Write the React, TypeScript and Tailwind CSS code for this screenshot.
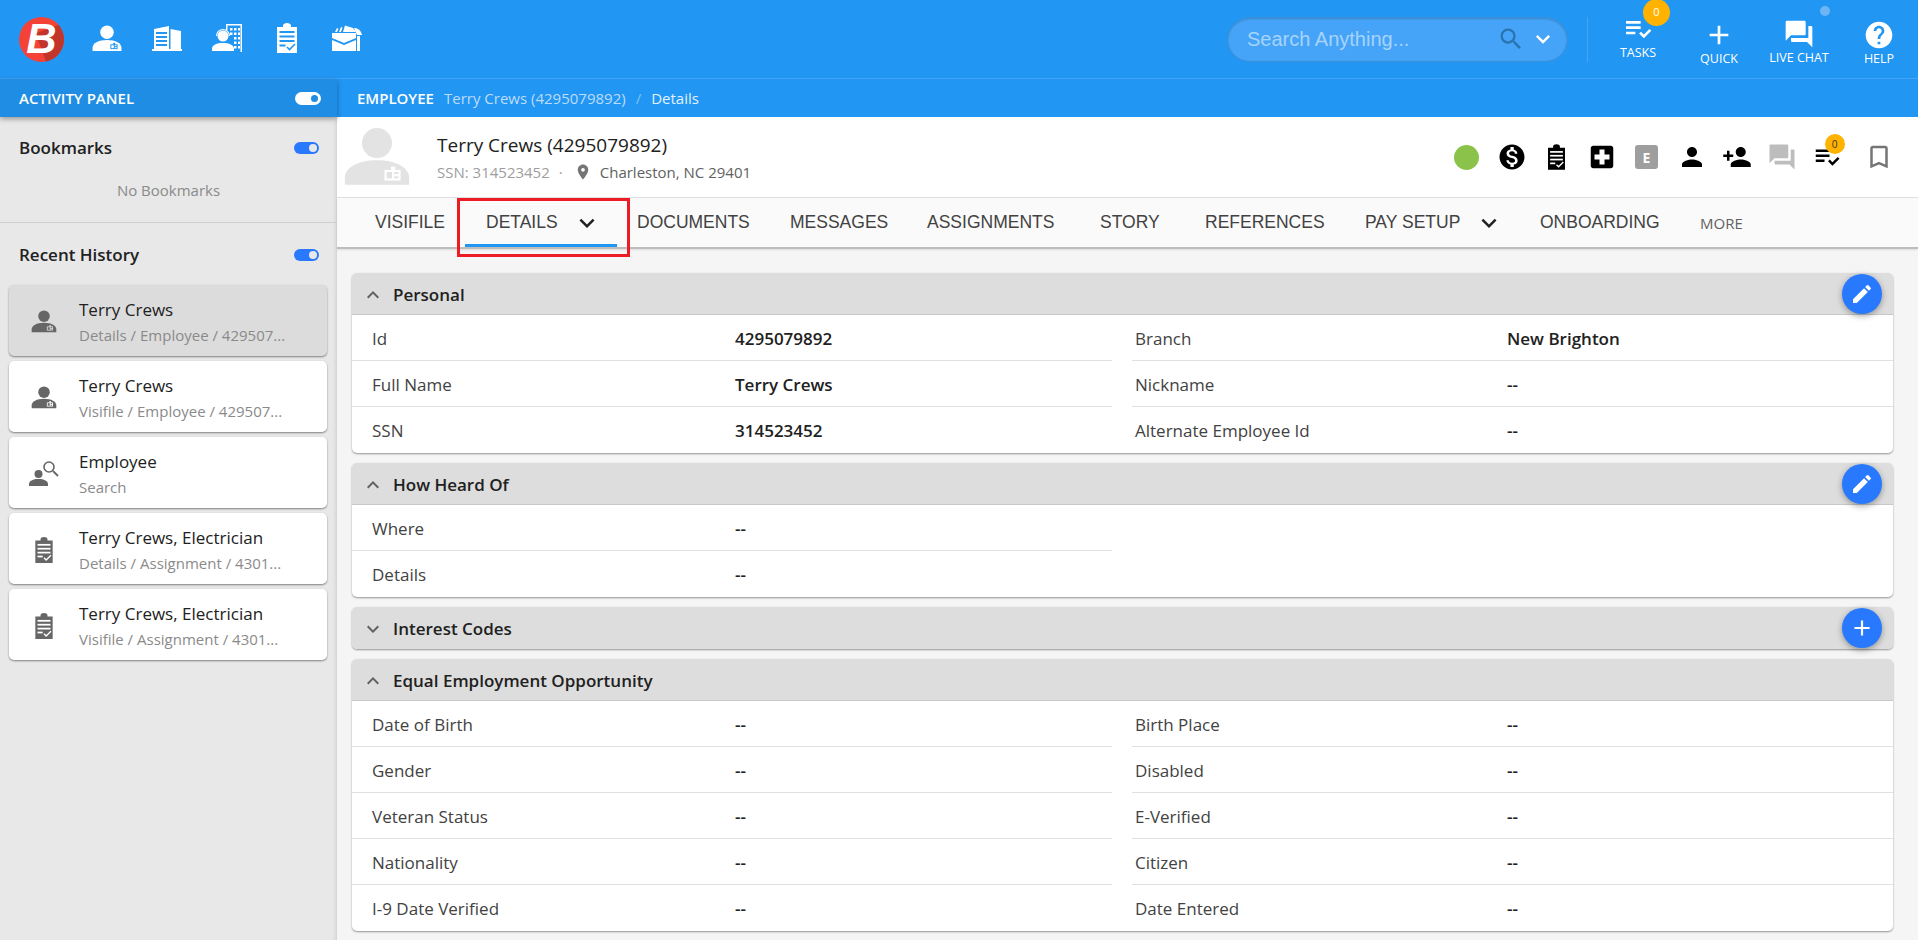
import React from 'react';
import {
  MdAdd,
  MdBookmarkBorder,
  MdEdit,
  MdExpandLess,
  MdExpandMore,
  MdHelp,
  MdKeyboardArrowDown,
  MdLocalHospital,
  MdMonetizationOn,
  MdPerson,
  MdPersonAdd,
  MdPlace,
  MdPlaylistAddCheck,
  MdQuestionAnswer,
  MdSearch,
} from 'react-icons/md';

type IconProps = {
  className?: string;
  cut?: string;
};

const PersonBadge = ({ className, cut = '#2196f3' }: IconProps) => (
  <svg viewBox="0 0 30 28" className={className} fill="currentColor">
    <circle cx="15" cy="7.500" r="7" />
    <path d="M0 27v-3.500C0 19 6 15.500 15 15.500S30 19 30 23.500V27z" />
    <rect x="18.500" y="20" width="7.500" height="5" fill={cut} />
    <rect x="19.500" y="21" width="2.500" height="3" fill="currentColor" />
    <rect x="23" y="21" width="2" height="1" fill="currentColor" />
    <rect x="23" y="23" width="2" height="1" fill="currentColor" />
    <rect x="21.500" y="18.500" width="2" height="2" fill={cut} />
  </svg>
);

const ClipboardCheck = ({ className, cut = '#2196f3' }: IconProps) => (
  <svg viewBox="0 0 20 30" className={className} fill="currentColor">
    <path d="M0 4h6V2.500C6 1 8 0 10 0s4 1 4 2.500V4h6v26H0z" />
    <rect x="2.500" y="8" width="15" height="2" fill={cut} />
    <rect x="2.500" y="12.500" width="15" height="2" fill={cut} />
    <rect x="2.500" y="17" width="15" height="2" fill={cut} />
    <rect x="2.500" y="21.500" width="6" height="2" fill={cut} />
    <path d="M10 24l2.500 2.500L18 21" fill="none" stroke={cut} strokeWidth="1.600" />
  </svg>
);

const BuildingIcon = ({ className }: IconProps) => (
  <svg viewBox="0 0 30 25" className={className} fill="currentColor">
    <path d="M2 3l15-3v23H2zM18.500 3L29 5v18H18.500zM0 23h30v2H0z" />
    <g fill="#2196f3">
      <rect x="4" y="6" width="11" height="2" />
      <rect x="4" y="10" width="11" height="2" />
      <rect x="4" y="14" width="11" height="2" />
      <rect x="4" y="18" width="11" height="2" />
    </g>
  </svg>
);

const AgentIcon = ({ className }: IconProps) => (
  <svg viewBox="0 0 30 28" className={className} fill="currentColor">
    <path d="M14 0h16v28h-1.500V1.500H15.500V6H14z" />
    <g>
      <rect x="18" y="4" width="2.500" height="2.500" />
      <rect x="22" y="4" width="2.500" height="2.500" />
      <rect x="26" y="4" width="2" height="2.500" />
      <rect x="18" y="8.500" width="2.500" height="2.500" />
      <rect x="22" y="8.500" width="2.500" height="2.500" />
      <rect x="26" y="8.500" width="2" height="2.500" />
      <rect x="22" y="13" width="2.500" height="2.500" />
      <rect x="26" y="13" width="2" height="2.500" />
      <rect x="22" y="17.500" width="2.500" height="2.500" />
      <rect x="26" y="17.500" width="2" height="2.500" />
      <rect x="22" y="22" width="2.500" height="2.500" />
      <rect x="26" y="22" width="2" height="2.500" />
    </g>
    <circle cx="11" cy="12" r="5.500" />
    <path d="M4.500 12a6.500 6.500 0 0 1 13 0" fill="none" stroke="currentColor" strokeWidth="1.200" />
    <path d="M0 27v-2.500C0 21 5 19 11 19s11 2 11 5.500V27z" />
  </svg>
);

const BriefcaseIcon = ({ className }: IconProps) => (
  <svg viewBox="0 0 30 28" className={className} fill="currentColor">
    <path d="M3 8l2-4 1.500.7L5 8zM7 8l2-5 1.500.5L9 8zM11 8l2-6.500 8 2.500 3 4z" />
    <path d="M22 4c4 0 7 2.500 8 7h-5z" />
    <path d="M0 9h24v5L12 19 0 14z" />
    <path d="M0 16l12 5 12-5v11H0z" />
    <rect x="25" y="12" width="3" height="15" />
  </svg>
);

const PersonSearch = ({ className }: IconProps) => (
  <svg viewBox="0 0 30 28" className={className}>
    <circle cx="9.500" cy="14" r="4" fill="currentColor" />
    <path d="M0 26v-2c0-3 4-5 9.500-5s9.500 2 9.500 5v2z" fill="currentColor" />
    <circle cx="20" cy="7" r="5" fill="none" stroke="currentColor" strokeWidth="1.600" />
    <path d="M24 11l5 5" stroke="currentColor" strokeWidth="1.800" />
  </svg>
);

const ToggleOn = ({ dark }: { dark?: boolean }) =>
  dark ? (
    <span className="flex h-[13px] w-[26px] items-center justify-end rounded-full bg-white pr-[3px]">
      <span className="h-[7px] w-[7px] rounded-full bg-[#1e8de3]" />
    </span>
  ) : (
    <span className="flex h-[12px] w-[25px] items-center justify-end rounded-full bg-[#2979ff] pr-[2px]">
      <span className="h-[8px] w-[8px] rounded-full bg-[#e8e8e8]" />
    </span>
  );

const topIcons = [
  <PersonBadge className="h-[27px] w-[30px]" />,
  <BuildingIcon className="h-[25px] w-[30px]" />,
  <AgentIcon className="h-[28px] w-[30px]" />,
  <ClipboardCheck cut="#2196f3" className="h-[30px] w-[20px]" />,
  <BriefcaseIcon className="h-[28px] w-[30px]" />,
];

const TopBar = () => (
  <header className="flex h-[79px] shrink-0 items-center border-b border-[#45a4f7] bg-[#2196f3] pl-[19px] pr-[8px] text-white">
    <div className="relative flex h-[45px] w-[45px] items-center justify-center overflow-hidden rounded-full bg-[#f44336]">
      <span className="absolute left-[24px] top-[8px] h-[50px] w-[40px] rotate-[-20deg] bg-[#c2352a]" />
      <span className="relative font-['Liberation_Sans',sans-serif] text-[42px] font-bold italic leading-none text-white">B</span>
    </div>
    <div className="ml-[13px] flex items-center pb-[2px]">
      {topIcons.map((icon, i) => (
        <div key={i} className="flex w-[60px] justify-center">
          {icon}
        </div>
      ))}
    </div>
    <div className="ml-auto flex h-[45px] w-[341px] items-center rounded-full border border-[#3a8fd9] bg-[#45a4f7] pl-[19px] pr-[10px] shadow-[inset_0_1px_2px_rgba(0,0,0,0.2)]">
      <span className="font-['Liberation_Sans',sans-serif] text-[20px] text-[#a5d3fb]">Search Anything...</span>
      <MdSearch className="ml-auto text-[28px] text-[#2a72b0]" />
      <MdKeyboardArrowDown className="ml-[4px] text-[28px] text-white" />
    </div>
    <div className="ml-[19px] h-[45px] w-px bg-[#45a4f7]" />
    <div className="relative flex w-[100px] flex-col items-center pb-[5px]">
      <MdPlaylistAddCheck className="text-[32px]" />
      <span className="absolute left-[55px] top-[-14px] flex h-[27px] w-[27px] items-center justify-center rounded-full bg-[#ffb300] font-['Open_Sans',sans-serif] text-[11px]">0</span>
      <span className="font-['Open_Sans',sans-serif] text-[12.500px] leading-[16px]">TASKS</span>
    </div>
    <div className="flex w-[62px] flex-col items-center pt-[8px]">
      <MdAdd className="text-[32px]" />
      <span className="font-['Open_Sans',sans-serif] text-[12.500px] leading-[16px]">QUICK</span>
    </div>
    <div className="relative flex w-[98px] flex-col items-center pt-[5px]">
      <MdQuestionAnswer className="text-[32px]" />
      <span className="absolute left-[70px] top-[-7px] h-[10px] w-[10px] rounded-full bg-[#6db5f5]" />
      <span className="font-['Open_Sans',sans-serif] text-[12.500px] leading-[16px]">LIVE CHAT</span>
    </div>
    <div className="flex w-[62px] flex-col items-center pt-[7px]">
      <MdHelp className="text-[32px]" />
      <span className="font-['Open_Sans',sans-serif] text-[12.500px] leading-[16px]">HELP</span>
    </div>
  </header>
);

type HistoryItem = {
  title: string;
  sub: string;
  icon: 'person' | 'search' | 'clip';
  active?: boolean;
};

const history: HistoryItem[] = [
  { title: 'Terry Crews', sub: 'Details / Employee / 429507...', icon: 'person', active: true },
  { title: 'Terry Crews', sub: 'Visifile / Employee / 429507...', icon: 'person' },
  { title: 'Employee', sub: 'Search', icon: 'search' },
  { title: 'Terry Crews, Electrician', sub: 'Details / Assignment / 4301...', icon: 'clip' },
  { title: 'Terry Crews, Electrician', sub: 'Visifile / Assignment / 4301...', icon: 'clip' },
];

const HistoryCard = ({ item }: { item: HistoryItem }) => (
  <div
    className={
      item.active
        ? 'flex h-[71px] items-center rounded-[5px] bg-[#dcdcdc] pt-[2px] shadow-[0_1px_2px_rgba(0,0,0,0.45)]'
        : 'flex h-[71px] items-center rounded-[5px] bg-white pt-[2px] shadow-[0_1px_2px_rgba(0,0,0,0.45)]'
    }
  >
    <div className="flex w-[70px] shrink-0 justify-center text-[#666666]">
      {item.icon === 'person' && <PersonBadge cut={item.active ? '#dcdcdc' : '#ffffff'} className="h-[23px] w-[26px]" />}
      {item.icon === 'search' && <PersonSearch className="h-[28px] w-[30px]" />}
      {item.icon === 'clip' && <ClipboardCheck cut="#ffffff" className="h-[26px] w-[18px]" />}
    </div>
    <div>
      <div className="text-[17px] leading-[22px] text-[#212121]">{item.title}</div>
      <div className="mt-[4px] text-[15px] leading-[20px] text-[#8a8a8a]">{item.sub}</div>
    </div>
  </div>
);

const Sidebar = () => (
  <aside className="flex w-[337px] shrink-0 flex-col bg-[#e8e8e8] shadow-[inset_-4px_0_4px_-3px_rgba(0,0,0,0.12)]">
    <div className="z-10 flex h-[38px] items-center justify-between bg-[#1e8de3] pl-[19px] pr-[16px] shadow-[0_2px_5px_rgba(0,0,0,0.35)]">
      <span className="text-[15px] font-semibold text-white">ACTIVITY PANEL</span>
      <ToggleOn dark />
    </div>
    <div className="flex items-center justify-between pl-[19px] pr-[18px] pt-[20px]">
      <span className="text-[17px] font-semibold leading-[22px] text-[#212121]">Bookmarks</span>
      <ToggleOn />
    </div>
    <div className="mt-[21px] h-[43px] border-b border-[#cfcfcf] text-center text-[15px] leading-[20px] text-[#8a8a8a]">No Bookmarks</div>
    <div className="flex items-center justify-between pl-[19px] pr-[18px] pt-[21px]">
      <span className="text-[17px] font-semibold leading-[22px] text-[#212121]">Recent History</span>
      <ToggleOn />
    </div>
    <div className="mt-[19px] flex flex-col gap-[5px] pl-[9px] pr-[10px]">
      {history.map((item, i) => (
        <HistoryCard key={i} item={item} />
      ))}
    </div>
  </aside>
);

const statusIcons = [
  <span className="h-[25px] w-[25px] rounded-full bg-[#8bc34a]" />,
  <MdMonetizationOn className="text-[30px] text-black" />,
  <ClipboardCheck cut="#ffffff" className="h-[26px] w-[17px] text-black" />,
  <MdLocalHospital className="text-[30px] text-black" />,
  <span className="flex h-[24px] w-[23px] items-center justify-center rounded-[3px] bg-[#9e9e9e] text-[14px] font-bold text-white">E</span>,
  <MdPerson className="text-[30px] text-black" />,
  <MdPersonAdd className="text-[30px] text-black" />,
  <MdQuestionAnswer className="text-[30px] text-[#bdbdbd]" />,
  <div className="relative">
    <MdPlaylistAddCheck className="text-[30px] text-black" />
    <span className="absolute left-[13px] top-[-8px] flex h-[20px] w-[20px] items-center justify-center rounded-full bg-[#ffb300] text-[10px] text-[#333333]">0</span>
  </div>,
];

const ProfileHeader = () => (
  <div className="flex h-[81px] items-center border-b border-[#e0e0e0] bg-white">
    <PersonBadge cut="#ffffff" className="ml-[6px] h-[60px] w-[68px] text-[#e3e3e3]" />
    <div className="ml-[26px] pt-[1px]">
      <div className="text-[19px] leading-[24px] text-[#212121]">Terry Crews (4295079892)</div>
      <div className="mt-[5px] flex items-center text-[15px] leading-[20px] text-[#9e9e9e]">
        <span>SSN: 314523452</span>
        <span className="ml-[9px]">·</span>
        <MdPlace className="ml-[11px] text-[18px] text-[#757575]" />
        <span className="ml-[8px] text-[#616161]">Charleston, NC 29401</span>
      </div>
    </div>
    <div className="ml-auto flex items-center pr-[17px]">
      {statusIcons.map((icon, i) => (
        <div key={i} className="flex w-[45px] justify-center">
          {icon}
        </div>
      ))}
      <div className="ml-[7px] flex w-[45px] justify-center">
        <MdBookmarkBorder className="text-[30px] text-[#757575]" />
      </div>
    </div>
  </div>
);

const TabBar = () => (
  <nav className="flex h-[51px] items-center border-b-2 border-[#bdbdbd] bg-[#fafafa] font-['Liberation_Sans',sans-serif] text-[17.500px] text-[#424242] shadow-[0_1px_2px_rgba(0,0,0,0.1)]">
    <span className="ml-[38px] w-[90px]">VISIFILE</span>
    <div className="relative flex h-full w-[152px] items-center border-b-[3px] border-[#2196f3] pl-[21px] pt-[3px]">
      <span>DETAILS</span>
      <MdKeyboardArrowDown className="ml-[14px] text-[30px] text-[#212121]" />
      <span className="absolute left-[-8px] right-[-13px] top-[0px] bottom-[-13px] border-[3px] border-[#ed1c24]" />
    </div>
    <span className="ml-[20px] w-[153px]">DOCUMENTS</span>
    <span className="w-[137px]">MESSAGES</span>
    <span className="w-[173px]">ASSIGNMENTS</span>
    <span className="w-[105px]">STORY</span>
    <span className="w-[160px]">REFERENCES</span>
    <div className="flex w-[175px] items-center">
      <span>PAY SETUP</span>
      <MdKeyboardArrowDown className="ml-[14px] text-[30px] text-[#212121]" />
    </div>
    <span className="w-[160px]">ONBOARDING</span>
    <span className="pt-[2px] font-['Open_Sans',sans-serif] text-[15px] text-[#616161]">MORE</span>
  </nav>
);

type Field = [string, string];

const FieldRow = ({ field, col }: { field: Field; col: 'left' | 'right' }) => (
  <div className="flex h-[46px] items-center border-b border-[#e0e0e0] pt-[2px] last:border-b-0">
    <span
      className={
        col === 'left'
          ? 'w-[383px] shrink-0 pl-[20px] text-[17px] text-[#424242]'
          : 'w-[375px] shrink-0 pl-[3px] text-[17px] text-[#424242]'
      }
    >
      {field[0]}
    </span>
    <span className="text-[17px] font-semibold text-[#212121]">{field[1]}</span>
  </div>
);

type SectionProps = {
  title: string;
  open?: boolean;
  left?: Field[];
  right?: Field[];
  fab?: 'edit' | 'add';
};

const Section = ({ title, open = true, left = [], right = [], fab }: SectionProps) => (
  <section className="relative rounded-[5px] bg-white shadow-[0_1px_2px_rgba(0,0,0,0.4)]">
    <div className={`flex h-[42px] items-center bg-[#dddddd] pl-[9px] pt-[2px] ${open ? 'rounded-t-[5px] border-b border-[#c8c8c8]' : 'rounded-[5px]'}`}>
      {open ? <MdExpandLess className="text-[24px] text-[#616161]" /> : <MdExpandMore className="text-[24px] text-[#616161]" />}
      <span className="ml-[8px] text-[17px] font-semibold text-[#212121]">{title}</span>
    </div>
    {open && (
      <div className="flex">
        <div className="w-[760px]">
          {left.map((f) => (
            <FieldRow key={f[0]} field={f} col="left" />
          ))}
        </div>
        <div className="ml-[20px] flex-1">
          {right.map((f) => (
            <FieldRow key={f[0]} field={f} col="right" />
          ))}
        </div>
      </div>
    )}
    {fab && (
      <button className="absolute right-[11px] top-[1px] flex h-[40px] w-[40px] items-center justify-center rounded-full bg-[#2979ff] text-white shadow-[0_2px_6px_rgba(0,0,0,0.35)]">
        {fab === 'edit' ? <MdEdit className="text-[24px]" /> : <MdAdd className="text-[26px]" />}
      </button>
    )}
  </section>
);

const Details = () => (
  <div className="flex flex-col gap-[10px] px-[15px] pr-[25px] pt-[24px]">
    <Section
      title="Personal"
      fab="edit"
      left={[
        ['Id', '4295079892'],
        ['Full Name', 'Terry Crews'],
        ['SSN', '314523452'],
      ]}
      right={[
        ['Branch', 'New Brighton'],
        ['Nickname', '--'],
        ['Alternate Employee Id', '--'],
      ]}
    />
    <Section
      title="How Heard Of"
      fab="edit"
      left={[
        ['Where', '--'],
        ['Details', '--'],
      ]}
    />
    <Section title="Interest Codes" open={false} fab="add" />
    <Section
      title="Equal Employment Opportunity"
      left={[
        ['Date of Birth', '--'],
        ['Gender', '--'],
        ['Veteran Status', '--'],
        ['Nationality', '--'],
        ['I-9 Date Verified', '--'],
      ]}
      right={[
        ['Birth Place', '--'],
        ['Disabled', '--'],
        ['E-Verified', '--'],
        ['Citizen', '--'],
        ['Date Entered', '--'],
      ]}
    />
  </div>
);

export default function App() {
  return (
    <div className="flex h-[940px] flex-col overflow-hidden bg-[#f5f5f5] font-['Open_Sans',sans-serif]">
      <TopBar />
      <div className="flex min-h-0 flex-1">
        <Sidebar />
        <main className="min-w-0 flex-1">
          <div className="flex h-[38px] items-center bg-[#2196f3] pl-[20px] text-[15px]">
            <span className="font-semibold text-white">EMPLOYEE</span>
            <span className="ml-[10px] text-[#bcdcfb]">Terry Crews (4295079892)</span>
            <span className="ml-[10px] text-[#7fc0f7]">/</span>
            <span className="ml-[10px] text-[#e3f2fd]">Details</span>
          </div>
          <ProfileHeader />
          <TabBar />
          <Details />
        </main>
      </div>
    </div>
  );
}
